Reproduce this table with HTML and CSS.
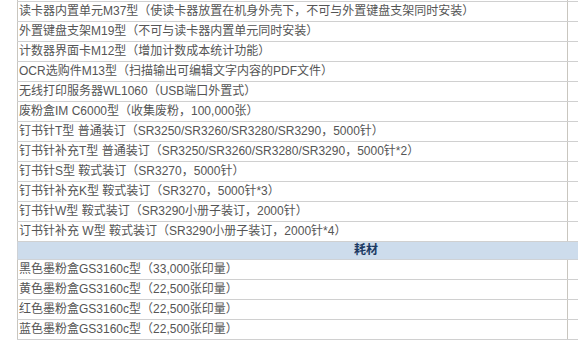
FILE: index.html
```html
<!DOCTYPE html>
<html lang="zh-CN">
<head>
<meta charset="utf-8">
<title>选购件与耗材</title>
<link rel="stylesheet" href="styles.css">
</head>
<body>
<table class="spec">
  <colgroup><col class="c-main"><col class="c-side"></colgroup>
  <tbody>
    <tr class="cut"><td></td><td></td></tr>
    <tr><td>读卡器内置单元M37型（使读卡器放置在机身外壳下，不可与外置键盘支架同时安装）</td><td></td></tr>
    <tr><td>外置键盘支架M19型（不可与读卡器内置单元同时安装）</td><td></td></tr>
    <tr><td>计数器界面卡M12型（增加计数成本统计功能）</td><td></td></tr>
    <tr><td>OCR选购件M13型（扫描输出可编辑文字内容的PDF文件）</td><td></td></tr>
    <tr><td>无线打印服务器WL1060（USB端口外置式）</td><td></td></tr>
    <tr><td>废粉盒IM C6000型（收集废粉，100,000张）</td><td></td></tr>
    <tr><td>钉书针T型 普通装订（SR3250/SR3260/SR3280/SR3290，5000针）</td><td></td></tr>
    <tr><td>钉书针补充T型 普通装订（SR3250/SR3260/SR3280/SR3290，5000针*2）</td><td></td></tr>
    <tr><td>钉书针S型 鞍式装订（SR3270，5000针）</td><td></td></tr>
    <tr><td>钉书针补充K型 鞍式装订（SR3270，5000针*3）</td><td></td></tr>
    <tr><td>钉书针W型 鞍式装订（SR3290小册子装订，2000针）</td><td></td></tr>
    <tr><td>订书针补充 W型 鞍式装订（SR3290小册子装订，2000针*4）</td><td></td></tr>
    <tr class="head"><th colspan="2">耗材</th></tr>
    <tr><td>黑色墨粉盒GS3160c型（33,000张印量）</td><td></td></tr>
    <tr><td>黄色墨粉盒GS3160c型（22,500张印量）</td><td></td></tr>
    <tr><td>红色墨粉盒GS3160c型（22,500张印量）</td><td></td></tr>
    <tr><td>蓝色墨粉盒GS3160c型（22,500张印量）</td><td></td></tr>
  </tbody>
</table>
</body>
</html>
```

FILE: styles.css
```css
html, body {
  margin: 0;
  padding: 0;
  background: #ffffff;
  overflow: hidden;
}

body {
  font-family: "Liberation Sans", "Noto Sans CJK TC", "Noto Sans CJK SC", sans-serif;
  font-size: 12px;
  color: #555555;
}

.spec {
  border-collapse: collapse;
  table-layout: fixed;
  width: 697px;
  margin: -19px 0 0 17px;
}

.c-main { width: 550px; }
.c-side { width: 147px; }

.spec td {
  height: 19px;
  padding: 0 0 0 1px;
  border-top: 1px solid #d0d0d0;
  border-bottom: 1px solid #d0d0d0;
  border-left: 1px solid #c9c6bf;
  border-right: 1px solid #c9c6bf;
  line-height: 19px;
  white-space: nowrap;
  overflow: hidden;
  vertical-align: middle;
}

.spec .head th {
  height: 17px;
  padding: 0;
  background: #cddcec;
  border: 1px solid #cfd2d6;
  color: #1c3a63;
  font-weight: bold;
  line-height: 17px;
  text-align: center;
}
```
